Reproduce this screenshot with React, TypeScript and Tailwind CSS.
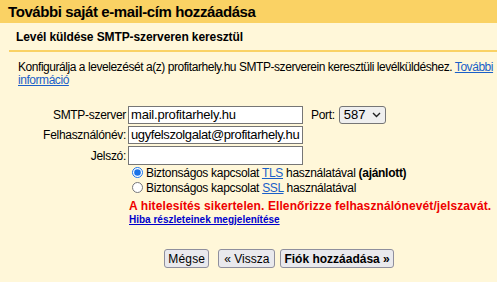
import { useState } from 'react';

export default function App() {
    const [secure, setSecure] = useState('tls');

    return (
        <div className="w-[497px] h-[282px] bg-[#fff7d9] font-['Liberation_Sans',Arial,sans-serif] text-black overflow-hidden">
            {/* title bar */}
            <div className="h-[23px] bg-[#fad264] pl-[8px] flex items-center">
                <h1 className="text-[15px] font-bold leading-none tracking-[-0.4px]">További saját e-mail-cím hozzáadása</h1>
            </div>

            <div className="pl-[9px]">
                <div className="h-[29px] border-b-2 border-[#fad264] flex items-center pl-[7px]">
                    <h2 className="text-[12px] font-bold tracking-[-0.1px]">Levél küldése SMTP-szerveren keresztül</h2>
                </div>

                <p className="mt-[9px] pl-[9px] text-[12px] leading-[13px] tracking-[-0.45px] whitespace-nowrap">
                    Konfigurálja a levelezését a(z) profitarhely.hu SMTP-szerverein keresztüli levélküldéshez.{' '}
                    <a href="#" className="text-[#1a5fc8] underline">
                        További
                        <br />
                        információ
                    </a>
                </p>

                {/* form */}
                <div className="mt-[19px] flex flex-col gap-[2px] text-[12px]">
                    <div className="flex items-center h-[18px]">
                        <label className="w-[119px] text-right pr-[2px] tracking-[-0.3px]">SMTP-szerver</label>
                        <input
                            defaultValue="mail.profitarhely.hu"
                            className="w-[175px] h-[18px] bg-white border border-[#767676] px-[2px] text-[13px] tracking-[-0.2px] font-['Liberation_Sans',Arial,sans-serif]"
                        />
                        <span className="ml-[8px] tracking-[-0.3px]">Port:</span>
                        <div className="ml-[4px] w-[47px] h-[18px] border border-[#767676] rounded-[3px] bg-[#efefef] flex items-center justify-between px-[4px] text-[13px]">
                            <span>587</span>
                            <svg width="9" height="6" viewBox="0 0 9 6" fill="none" stroke="#222" strokeWidth="1.4">
                                <path d="M1 1l3.5 3.5L8 1" />
                            </svg>
                        </div>
                    </div>
                    <div className="flex items-center h-[18px]">
                        <label className="w-[119px] text-right pr-[2px] tracking-[-0.3px]">Felhasználónév:</label>
                        <input
                            defaultValue="ugyfelszolgalat@profitarhely.hu"
                            className="w-[175px] h-[18px] bg-white border border-[#767676] px-[2px] text-[13px] tracking-[-0.4px] font-['Liberation_Sans',Arial,sans-serif]"
                        />
                    </div>
                    <div className="flex items-center h-[19px]">
                        <label className="w-[119px] text-right pr-[2px] tracking-[-0.3px]">Jelszó:</label>
                        <input
                            type="password"
                            className="w-[175px] h-[19px] bg-white border border-[#767676] px-[3px]"
                        />
                    </div>
                </div>

                <div className="pl-[123px] flex flex-col text-[12px] tracking-[-0.3px]">
                    <label className="flex items-center h-[15px] gap-[3px]">
                        <input
                            type="radio"
                            name="sec"
                            checked={secure === 'tls'}
                            onChange={() => setSecure('tls')}
                            className="w-[11px] h-[11px] m-0 accent-[#1a73e8]"
                        />
                        <span>
                            Biztonságos kapcsolat <a href="#" className="text-[#1a5fc8] underline">TLS</a> használatával{' '}
                            <b>(ajánlott)</b>
                        </span>
                    </label>
                    <label className="flex items-center h-[15px] gap-[3px]">
                        <input
                            type="radio"
                            name="sec"
                            checked={secure === 'ssl'}
                            onChange={() => setSecure('ssl')}
                            className="w-[11px] h-[11px] m-0"
                        />
                        <span>
                            Biztonságos kapcsolat <a href="#" className="text-[#1a5fc8] underline">SSL</a> használatával
                        </span>
                    </label>
                </div>

                <div className="pl-[120px] mt-[4px]">
                    <div className="text-[12px] font-bold text-[#ee0000] leading-[15px] tracking-[0.1px]">
                        A hitelesítés sikertelen. Ellenőrizze felhasználónevét/jelszavát.
                    </div>
                    <a href="#" className="block text-[10px] font-bold text-[#0000cc] underline leading-[12px]">
                        Hiba részleteinek megjelenítése
                    </a>
                </div>

                {/* buttons */}
                <div className="mt-[23px] flex items-center justify-center gap-[5px] pl-[52px] text-[12px]">
                    <button className="h-[19px] px-[3px] bg-[#e9e9ed] border border-[#8f8f9d] rounded-[3px] tracking-[0.2px]">Mégse</button>
                    <button className="ml-[4px] h-[19px] px-[5px] bg-[#e9e9ed] border border-[#8f8f9d] rounded-[3px]">« Vissza</button>
                    <button className="h-[19px] px-[3px] bg-[#e9e9ed] border border-[#8f8f9d] rounded-[3px] font-bold">Fiók hozzáadása »</button>
                </div>
            </div>
        </div>
    );
}
